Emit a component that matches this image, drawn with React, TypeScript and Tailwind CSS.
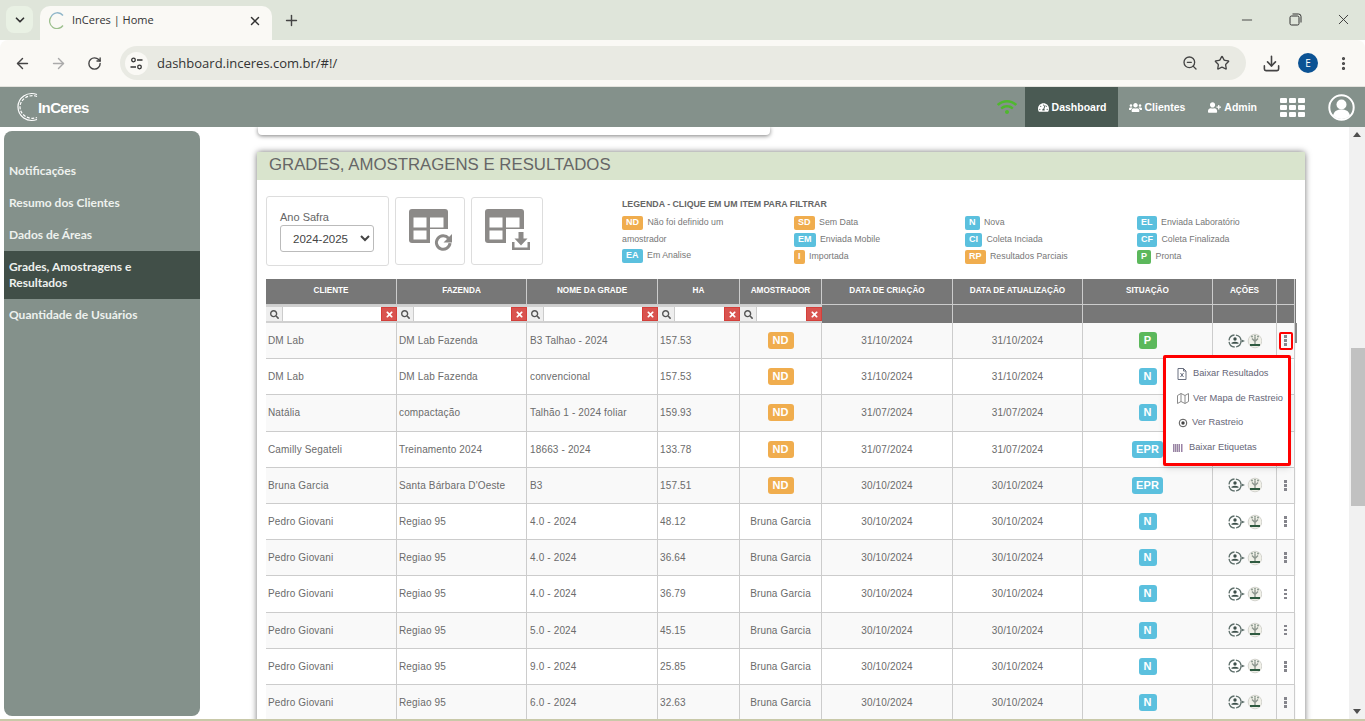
import React from "react";
import { ArrowLeft, ArrowRight, RotateCw, ZoomOut, Star, Download, MoreVertical, Minus, X, Plus, ChevronDown } from "lucide-react";
import { FaTachometerAlt, FaUsers, FaUserPlus, FaSearch, FaTimes, FaWifi } from "react-icons/fa";

const COLS = "grid grid-cols-[131px_130px_131px_82px_82px_131px_130px_130px_64px_18px]";
const ARIAL = "font-['Liberation_Sans',Arial,sans-serif]";
const SEGOE = "font-['Open_Sans','Noto_Sans',sans-serif]";

function Logo() {
  return (
    <div className="flex items-center ml-[16px]">
      <svg width="24" height="32" viewBox="0 0 24 32" fill="none">
        <path d="M21 3.500C11 0 2 7 2 16s9 16 19 12.500" stroke="#fff" strokeWidth="1.200" />
        <path d="M21 5.500C13 2.500 4 8 4 16s9 13.500 17 10.500" stroke="#fff" strokeWidth="1.200" strokeDasharray="3 1.500" />
      </svg>
      <span className={`${ARIAL} text-white font-bold text-[15px] leading-none tracking-[-0.6px] -ml-[2px]`}>InCeres</span>
    </div>
  );
}

function TableIcon({ variant }: { variant: "refresh" | "download" }) {
  return (
    <svg width="46" height="44" viewBox="0 0 46 44">
      <rect x="0" y="0" width="39" height="34" rx="3" fill="#8c8a88" />
      <rect x="4.500" y="8.500" width="13" height="10" fill="#fff" />
      <rect x="21" y="8.500" width="13.500" height="10" fill="#fff" />
      <rect x="4.500" y="21.500" width="13" height="9" fill="#fff" />
      <rect x="21" y="20" width="22" height="24" fill="#fff" />
      {variant === "refresh" ? (
        <g>
          <path d="M39.500 29.200a6.800 6.800 0 1 0 1.500 5" fill="none" stroke="#8c8a88" strokeWidth="3" />
          <path d="M43 25v8.500h-8.500z" fill="#8c8a88" />
        </g>
      ) : (
        <g fill="#8c8a88">
          <path d="M33.500 23h5v6.500h4L36 36.500l-6.500-7h4z" />
          <path d="M27 33h2.500v5.500h13V33H45v8H27z" />
        </g>
      )}
    </svg>
  );
}

function Badge({ t, c, cls = "" }: { t: string; c: string; cls?: string }) {
  return (
    <span className={`inline-flex items-center justify-center h-[14px] rounded-[2px] px-[4px] text-white font-bold text-[9px] leading-none ${c} ${cls}`}>{t}</span>
  );
}

const ORANGE = "bg-[#f0ad4e]";
const BLUE = "bg-[#5bc0de]";
const GREEN = "bg-[#5cb85c]";

function Legend() {
  const Item = ({ t, c, l }: { t: string; c: string; l: string }) => (
    <div className="flex items-center gap-[4.500px] h-[17px]">
      <Badge t={t} c={c} />
      <span>{l}</span>
    </div>
  );
  return (
    <div className={`ml-[79px] mt-[17px] w-[680px] shrink-0 ${ARIAL} text-[8.800px] text-[#777]`}>
      <div className="font-bold text-[#666] h-[17px] leading-[14px]">LEGENDA - CLIQUE EM UM ITEM PARA FILTRAR</div>
      <div className="grid grid-cols-[172px_171px_172px_165px]">
        <div>
          <div className="flex items-center gap-[4.500px] h-[17px]">
            <Badge t="ND" c={ORANGE} />
            <span>Não foi definido um</span>
          </div>
          <div className="h-[16px] leading-[16px]">amostrador</div>
          <Item t="EA" c={BLUE} l="Em Analise" />
        </div>
        <div>
          <Item t="SD" c={ORANGE} l="Sem Data" />
          <Item t="EM" c={BLUE} l="Enviada Mobile" />
          <Item t="I" c={ORANGE} l="Importada" />
        </div>
        <div>
          <Item t="N" c={BLUE} l="Nova" />
          <Item t="CI" c={BLUE} l="Coleta Inciada" />
          <Item t="RP" c={ORANGE} l="Resultados Parciais" />
        </div>
        <div>
          <Item t="EL" c={BLUE} l="Enviada Laboratório" />
          <Item t="CF" c={BLUE} l="Coleta Finalizada" />
          <Item t="P" c={GREEN} l="Pronta" />
        </div>
      </div>
    </div>
  );
}

function ActionIcons() {
  return (
    <svg width="34" height="16" viewBox="0 0 34 16" fill="none">
      <circle cx="7" cy="8" r="6" stroke="#5f706c" strokeWidth="1.300" strokeDasharray="8 1.500" />
      <circle cx="7" cy="6" r="1.700" fill="#3d4f4a" />
      <path d="M3.500 10.800h7v-1q-3.500-2-7 0z" fill="#3d4f4a" />
      <path d="M13.500 6.500l3.500 1.500-3.500 1.500z" fill="#5f706c" />
      <circle cx="27" cy="8" r="6.800" fill="#f0f0e8" stroke="#d4d4ce" />
      <path d="M27 4v7M24 5.500l3 3 3-3" stroke="#8f9890" strokeWidth="1.400" />
      <circle cx="24" cy="3.500" r=".9" fill="#7f8f85" />
      <circle cx="27" cy="2.800" r=".9" fill="#7f8f85" />
      <circle cx="30" cy="3.500" r=".9" fill="#7f8f85" />
      <path d="M22 11h10v2h-10z" fill="#2f5a40" />
    </svg>
  );
}

function Kebab() {
  return (
    <span className="flex flex-col items-center gap-[1.500px]">
      <span className="w-[2.500px] h-[2.500px] bg-[#85858c]" />
      <span className="w-[2.500px] h-[2.500px] bg-[#85858c]" />
      <span className="w-[2.500px] h-[2.500px] bg-[#85858c]" />
    </span>
  );
}

const rows = [
  ["DM Lab", "DM Lab Fazenda", "B3 Talhao - 2024", "157.53", "ND", "31/10/2024", "31/10/2024", "P"],
  ["DM Lab", "DM Lab Fazenda", "convencional", "157.53", "ND", "31/10/2024", "31/10/2024", "N"],
  ["Natália", "compactação", "Talhão 1 - 2024 foliar", "159.93", "ND", "31/07/2024", "31/07/2024", "N"],
  ["Camilly Segateli", "Treinamento 2024", "18663 - 2024", "133.78", "ND", "31/07/2024", "31/07/2024", "EPR"],
  ["Bruna Garcia", "Santa Bárbara D'Oeste", "B3", "157.51", "ND", "30/10/2024", "30/10/2024", "EPR"],
  ["Pedro Giovani", "Regiao 95", "4.0 - 2024", "48.12", "Bruna Garcia", "30/10/2024", "30/10/2024", "N"],
  ["Pedro Giovani", "Regiao 95", "4.0 - 2024", "36.64", "Bruna Garcia", "30/10/2024", "30/10/2024", "N"],
  ["Pedro Giovani", "Regiao 95", "4.0 - 2024", "36.79", "Bruna Garcia", "30/10/2024", "30/10/2024", "N"],
  ["Pedro Giovani", "Regiao 95", "5.0 - 2024", "45.15", "Bruna Garcia", "30/10/2024", "30/10/2024", "N"],
  ["Pedro Giovani", "Regiao 95", "9.0 - 2024", "25.85", "Bruna Garcia", "30/10/2024", "30/10/2024", "N"],
  ["Pedro Giovani", "Regiao 95", "6.0 - 2024", "32.63", "Bruna Garcia", "30/10/2024", "30/10/2024", "N"],
];

const heads = ["CLIENTE", "FAZENDA", "NOME DA GRADE", "HA", "AMOSTRADOR", "DATA DE CRIAÇÃO", "DATA DE ATUALIZAÇÃO", "SITUAÇÃO", "AÇÕES", ""];

function Filter() {
  return (
    <div className="flex h-full border-y-2 border-[#d0d0d0]">
      <span className="w-[17px] bg-[#eee] border-r border-[#ccc] flex items-center justify-center text-[#555] text-[9px]"><FaSearch /></span>
      <span className="flex-1 bg-white" />
      <span className="w-[16px] bg-[#d9534f] border border-[#d43f3a] flex items-center justify-center text-white text-[9px]"><FaTimes /></span>
    </div>
  );
}

function Table() {
  const cell = "flex items-center border-r border-b border-[#ccc] h-full min-w-0 whitespace-nowrap";
  return (
    <div className={`relative ${ARIAL}`}>
      <div className={`${COLS} h-[26px] bg-[#777] text-white text-[8.200px] font-bold`}>
        {heads.map((h, i) => (
          <div key={i} className="flex items-center justify-center border-r border-b border-[#ccc]">{h}</div>
        ))}
      </div>
      <div className={`${COLS} h-[18px] bg-[#777]`}>
        {[0, 1, 2, 3, 4].map((i) => <Filter key={i} />)}
        {[5, 6, 7, 8, 9].map((i) => <div key={i} className="border-r border-[#ccc]" />)}
      </div>
      <div className="text-[10px] text-[#6b6b6b] tracking-[0.15px]">
        {rows.map((r, i) => (
          <div key={i} className={`${COLS} h-[36.200px] ${i % 2 === 0 ? "bg-[#f9f9f9]" : "bg-white"}`}>
            <div className={`${cell} pl-[2px]`}>{r[0]}</div>
            <div className={`${cell} pl-[2px]`}>{r[1]}</div>
            <div className={`${cell} pl-[3px]`}>{r[2]}</div>
            <div className={`${cell} pl-[2px]`}>{r[3]}</div>
            <div className={`${cell} justify-center`}>
              {r[4] === "ND" ? <Badge t="ND" c={ORANGE} cls="!h-[17px] !text-[11px] w-[26px] !rounded-[3px]" /> : r[4]}
            </div>
            <div className={`${cell} justify-center`}>{r[5]}</div>
            <div className={`${cell} justify-center`}>{r[6]}</div>
            <div className={`${cell} justify-center`}>
              <Badge t={r[7]} c={r[7] === "P" ? GREEN : BLUE} cls={`!h-[17px] !text-[11px] !rounded-[3px] ${r[7] === "EPR" ? "w-[31px]" : "w-[18px]"}`} />
            </div>
            <div className={`${cell} justify-center`}><ActionIcons /></div>
            <div className={`${cell} justify-center`}><Kebab /></div>
          </div>
        ))}
      </div>
      <div className="absolute left-[1029px] top-[44px] w-[2px] h-[20px] bg-[#888]" />
      <div className="absolute left-[1013px] top-[53px] w-[14px] h-[18px] border-[2.500px] border-[#f00] rounded-[2px]" />
      <Menu />
    </div>
  );
}

function Menu() {
  const row = "flex items-center h-[24.500px] whitespace-nowrap";
  return (
    <div className="absolute left-[897px] top-[76px] w-[128px] h-[111px] bg-white border-[3px] border-[#f00] rounded-[2px] text-[9.300px] text-[#667] pt-[4px] shadow-md">
      <div className={`${row} pl-[11px] gap-[6px]`}>
        <svg width="10" height="12" viewBox="0 0 10 12" fill="none" stroke="#6a7080"><path d="M1 .5h5.500L9 3v8.500H1z" /><path d="M6.500.5V3H9M3.500 5l3 4M6.500 5l-3 4" /></svg>
        <span>Baixar Resultados</span>
      </div>
      <div className={`${row} pl-[11px] gap-[4px]`}>
        <svg width="12" height="11" viewBox="0 0 12 11" fill="none" stroke="#8a8a8a"><path d="M.5 2.500l3.500-2 4 2 3.500-2v8l-3.500 2-4-2-3.500 2zM4 .5v8M8 2.500v8" /></svg>
        <span>Ver Mapa de Rastreio</span>
      </div>
      <div className={`${row} pl-[12px] gap-[4px]`}>
        <svg width="10" height="10" viewBox="0 0 10 10" fill="none"><circle cx="5" cy="5" r="3.800" stroke="#555" /><circle cx="5" cy="5" r="1.700" fill="#444" /></svg>
        <span>Ver Rastreio</span>
      </div>
      <div className={`${row} pl-[7px] gap-[6px]`}>
        <svg width="10" height="8" viewBox="0 0 10 8"><path d="M0 0h1v8H0zM2 0h1v8H2zM4 0h1v8H4zM6 0h1v8H6zM8 0h1.500v8H8z" fill="#9a82a6" /><path d="M1 0h1v8H1zM3 0h1v8H3zM5 0h1v8H5z" fill="#c9c4cc" /></svg>
        <span>Baixar Etiquetas</span>
      </div>
    </div>
  );
}

function Sidebar() {
  const items = ["Notificações", "Resumo dos Clientes", "Dados de Áreas"];
  const it = "px-[5px] h-[32px] flex items-center";
  return (
    <aside className="ml-[4px] mt-[4px] w-[196px] h-[585px] shrink-0 bg-[#84918b] rounded-[8px] pt-[24px] font-['Lato',sans-serif] font-bold text-[12px] text-[#eef1ee]">
      {items.map((t) => <div key={t} className={it}>{t}</div>)}
      <div className="bg-[#414f48] px-[5px] h-[48px] flex items-center leading-[16px]">Grades, Amostragens e<br />Resultados</div>
      <div className={it}>Quantidade de Usuários</div>
    </aside>
  );
}

function Panel() {
  return (
    <div className="mt-[17px] bg-white shadow-[0_0_6px_rgba(0,0,0,0.55)] rounded-t-[3px] h-[600px]">
      <div className={`h-[28px] bg-[#d9e4cd] pl-[12px] pb-[2px] flex items-center text-[16.800px] text-[#666] ${ARIAL}`}>GRADES, AMOSTRAGENS E RESULTADOS</div>
      <div className="px-[9px]">
        <div className="h-[99px] flex">
          <div className={`mt-[16px] w-[123px] h-[70px] shrink-0 border border-[#ddd] rounded-[3px] pl-[13px] pt-[13px] ${ARIAL}`}>
            <div className="text-[11px] leading-[14px] text-[#666]">Ano Safra</div>
            <select defaultValue="2024-2025" className="mt-[1px] w-[94px] h-[27px] border border-[#bbb] rounded-[3px] bg-white pl-[8px] text-[11.500px] text-[#444]">
              <option>2024-2025</option>
            </select>
          </div>
          <div className="ml-[6px] mt-[17px] w-[70px] h-[68px] shrink-0 border border-[#ddd] rounded-[3px] pl-[13px] pt-[11px]"><TableIcon variant="refresh" /></div>
          <div className="ml-[6px] mt-[17px] w-[72px] h-[68px] shrink-0 border border-[#ddd] rounded-[3px] pl-[13px] pt-[11px]"><TableIcon variant="download" /></div>
          <Legend />
        </div>
        <Table />
      </div>
    </div>
  );
}

function Browser() {
  return (
    <div className={`${SEGOE} shrink-0`}>
      <div className="h-[40px] bg-[#dfe5da] flex items-end relative">
        <div className="ml-[6px] mb-[7px] w-[27px] h-[27px] rounded-[8px] bg-[#e9f1e4] flex items-center justify-center text-[#333]"><ChevronDown size={14} strokeWidth={3} /></div>
        <div className="ml-[7px] w-[232px] h-[34px] bg-[#faf9f5] rounded-t-[10px] flex items-center pl-[8px] pr-[10px] pb-[5px]">
          <svg width="17" height="17" viewBox="0 0 17 17" fill="none"><path d="M15 3.500A7 7 0 0 0 3 5" stroke="#8fb6c9" strokeWidth="1.300" /><path d="M3 5A7 7 0 0 0 15 13.500" stroke="#9dc08e" strokeWidth="1.300" /></svg>
          <span className="ml-[7px] flex-1 text-[11px] text-[#333]">InCeres | Home</span>
          <X size={14} strokeWidth={2.500} className="text-[#333]" />
        </div>
        <Plus size={17} strokeWidth={2} className="ml-[11px] mb-[11px] text-[#444]" />
        <div className="ml-auto flex items-center mb-[12px] text-[#333]">
          <Minus size={16} strokeWidth={1.300} className="mr-[34px]" />
          <svg width="13" height="13" viewBox="0 0 13 13" fill="none" stroke="#333" className="mr-[33px]"><rect x="1" y="3" width="9" height="9" rx="1.500" /><path d="M3.500 1h6A2.500 2.500 0 0 1 12 3.500v6" /></svg>
          <X size={17} strokeWidth={1.300} className="mr-[13px]" />
        </div>
      </div>
      <div className="h-[47px] bg-[#faf9f5] rounded-t-[8px] flex items-center border-b border-[#e3e3dd] text-[#444]">
        <ArrowLeft size={17} className="ml-[14px]" />
        <ArrowRight size={17} className="ml-[19px] text-[#aaa]" />
        <RotateCw size={15} strokeWidth={2.200} className="ml-[20px]" />
        <div className="ml-[18px] w-[1126px] h-[34px] rounded-full bg-[#e9eae3] flex items-center">
          <span className="ml-[5px] w-[23px] h-[23px] rounded-full bg-[#faf9f5] flex items-center justify-center">
            <svg width="13" height="13" viewBox="0 0 13 13" fill="none" stroke="#333" strokeWidth="1.300"><circle cx="3.500" cy="3" r="1.800" /><path d="M7 3h5.500M.5 10H6" /><circle cx="9.500" cy="10" r="1.800" /></svg>
          </span>
          <span className="ml-[9px] pt-[2px] text-[13px] text-[#333]">dashboard.inceres.com.br/#!/</span>
          <ZoomOut size={16} className="ml-auto mr-[16px]" />
          <Star size={16} className="mr-[16px]" />
        </div>
        <Download size={19} className="ml-[16px]" />
        <span className="ml-[17px] w-[20px] h-[20px] rounded-full bg-[#0b5394] text-white text-[10px] flex items-center justify-center">E</span>
        <MoreVertical size={17} strokeWidth={2.500} className="ml-[17px]" />
      </div>
    </div>
  );
}

function NavBar() {
  const link = `flex items-center text-white font-bold text-[10.500px] pt-[1px] ${ARIAL}`;
  return (
    <nav className="h-[40px] shrink-0 bg-[#84918b] flex items-center">
      <Logo />
      <FaWifi size={20} className="ml-auto text-[#4fb82e]" />
      <div className={`${link} gap-[3px] ml-[8px] w-[93px] h-full bg-[#4a5a53] justify-center`}><FaTachometerAlt size={11} />Dashboard</div>
      <div className={`${link} gap-[2px] ml-[11px]`}><FaUsers size={13} />Clientes</div>
      <div className={`${link} gap-[3px] ml-[23px]`}><FaUserPlus size={13} />Admin</div>
      <div className="ml-[23px] grid grid-cols-3 gap-[2px] w-[25px]">
        {Array.from({ length: 9 }).map((_, i) => <span key={i} className="h-[5px] bg-white rounded-[1px]" />)}
      </div>
      <svg width="27" height="27" viewBox="0 0 27 27" fill="none" className="ml-[23px] mr-[10px]">
        <circle cx="13.500" cy="13.500" r="12.200" stroke="#fff" strokeWidth="2" />
        <circle cx="13.500" cy="10.500" r="5" fill="#fff" />
        <path d="M5 21.500c1-4.500 4.500-6 8.500-6s7.500 1.500 8.500 6a12 12 0 0 1-17 0z" fill="#fff" />
      </svg>
    </nav>
  );
}

export default function App() {
  return (
    <div className="w-[1365px] h-[721px] overflow-hidden flex flex-col bg-white">
      <Browser />
      <NavBar />
      <div className="flex-1 min-h-0 flex overflow-hidden border-b-2 border-[#c9c9a9]">
        <Sidebar />
        <div className="flex-1 min-w-0 pl-[57px] pr-[44px]">
          <div className="ml-[1px] w-[512px] h-[8px] bg-white shadow-[0_1px_4px_rgba(0,0,0,0.5)] rounded-b-[4px]" />
          <Panel />
        </div>
        <div className="w-[16px] shrink-0 bg-[#f1f1f1] flex flex-col relative">
          <span className="mx-auto mt-[5px] w-0 h-0 border-x-[4px] border-x-transparent border-b-[5px] border-b-[#505050]" />
          <div className="absolute left-[2px] right-0 top-[221px] h-[158px] bg-[#c1c1c1]" />
          <span className="mt-auto mb-[5px] mx-auto w-0 h-0 border-x-[4px] border-x-transparent border-t-[5px] border-t-[#505050]" />
        </div>
      </div>
    </div>
  );
}
